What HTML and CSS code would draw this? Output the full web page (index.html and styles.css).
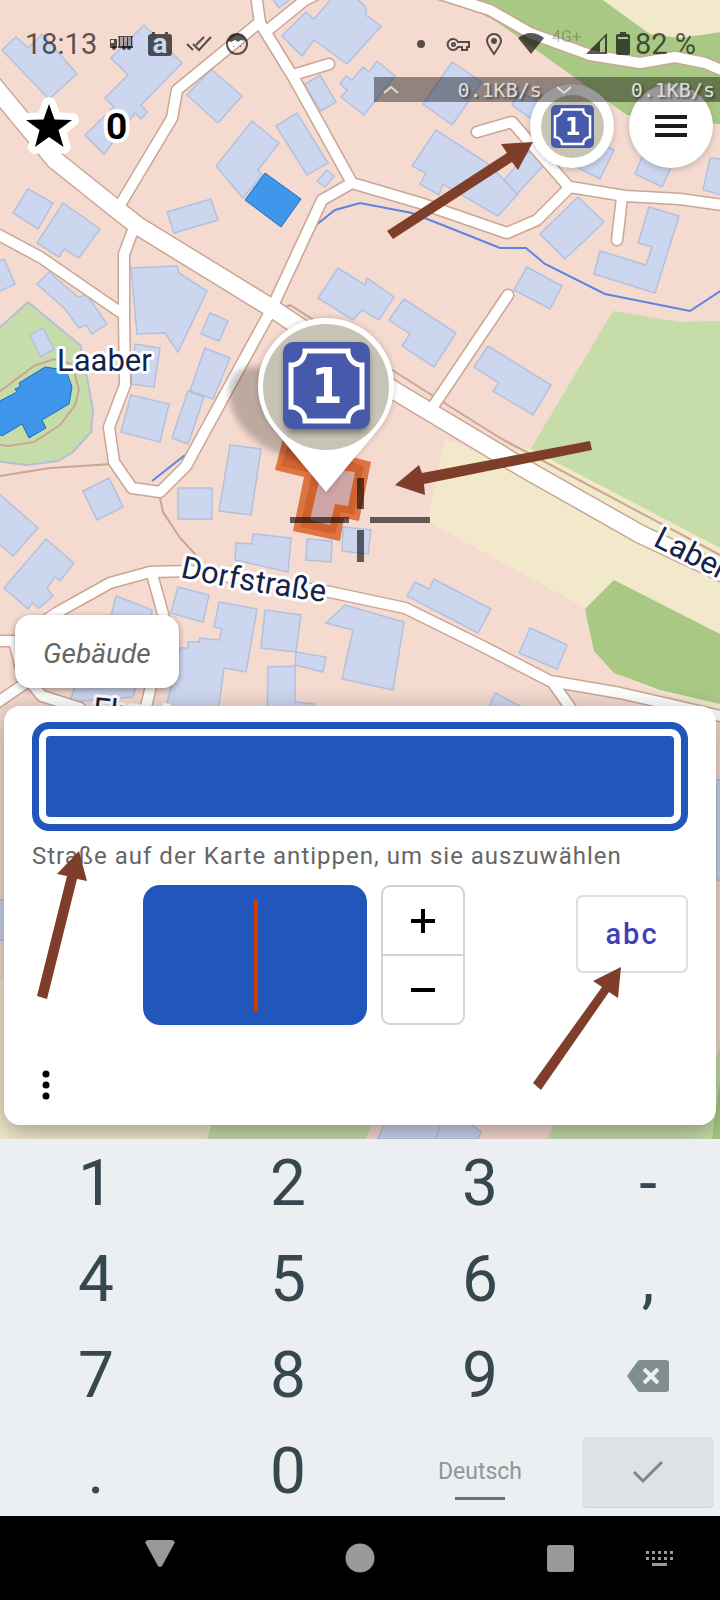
FILE: index.html
```
<!DOCTYPE html>
<html lang="de">
<head>
    <meta charset="UTF-8">
    <meta name="viewport" content="width=device-width, initial-scale=1.0">
    <title>Hausnummer</title>
    <link rel="stylesheet" href="styles.css">
</head>
<body>
    <main class="map-screen">
        <svg class="map" viewBox="0 0 720 1139" preserveAspectRatio="xMidYMin slice" role="img" aria-label="Karte von Laaber">
            <defs>
                <symbol id="housenumber" viewBox="0 0 87 87">
                    <rect width="87" height="87" rx="10" fill="#4759ab"/>
                    <path d="M22 9H65A14 14 0 0 0 79 23V65A14 14 0 0 0 65 79H22A14 14 0 0 0 8 65V23A14 14 0 0 0 22 9Z" fill="none" stroke="#fff" stroke-width="5"/>
                    <text x="44" y="61" text-anchor="middle" class="sign-digit">1</text>
                </symbol>
                <filter id="soft" x="-20%" y="-20%" width="140%" height="140%"><feGaussianBlur stdDeviation="3"/></filter>
                <g id="roads">
                    <path d="M256 -6L260 23L295 80L352 183"/>
                    <path d="M260 22L177 90L172 118L120 205"/>
                    <path d="M268 30L305 0L330 -12"/>
                    <path d="M293 75L329 64"/>
                    <path d="M133 230L124 254L124 315L125 385L109 427L114 462L132 488L160 492L186 466L270 312L322 200L352 183L420 203L507 233L537 220L570 187L625 196L680 199L730 206"/>
                    <path d="M477 132L512 122L568 186"/>
                    <path d="M622 198L617 240"/>
                    <path d="M-5 233L40 257L120 312"/>
                    <path d="M508 295L432 408"/>
                    <path d="M440 -6L490 10L530 33L590 55L640 63L675 57L705 63L740 78"/>
                    <path d="M20 638L58 612L110 583L150 572L190 571L330 592L405 608L480 645L550 681L620 693L720 716"/>
                    <path d="M152 574L166 625L144 715"/>
                    <path d="M553 683L576 716"/>
                    <path d="M-5 641H14L22 672L42 696L80 708M-5 704L30 680"/>
                </g>
                <path id="main-road" d="M-6 86L55 160L115 208L138 226L270 307L395 391L430 412L520 466L640 534L725 574"/>
            </defs>

            <!-- land use -->
            <g class="landuse">
                <path class="forest" d="M455 0H603L650 34L680 38L720 32V124L627 115L497 22Z"/>
                <path class="field" d="M603 0H720V32L680 38L650 34Z"/>
                <path class="meadow" d="M613 311L680 322L720 321V548L530 450Z"/>
                <path class="field" d="M445 439L485 455L529 448L720 548V715L680 708L614 673L585 608L427 521Z"/>
                <path class="residential" d="M585 608L594 651L614 673L660 692L720 712H560V600Z"/>
                <path class="forest" d="M614 580L720 634V704L660 690L614 673L594 651L585 609Z"/>
                <path class="meadow outlined" d="M-5 332L28 302L80 345L84 362L93 410L91 432L73 452L58 461L27 465L-5 461Z"/>
                <path class="field" d="M0 980H260V1139H0Z"/>
                <path class="meadow" d="M213 1120L207 1139H366L373 1120ZM555 1120L548 1139H720V1045L700 1120Z"/>
                <path class="forest" d="M720 1080L712 1139H720Z"/>
            </g>

            <!-- tracks -->
            <g class="track">
                <path d="M-5 395L34 366L54 359L72 364L79 390L75 405L60 425L34 442L8 446L-5 444"/>
                <path d="M0 476L50 468L112 464"/>
                <path d="M160 498L163 512L180 538L196 555"/>
                <path d="M280 310L290 305L400 375L500 438L720 555"/>
            </g>

            <!-- streams -->
            <g class="stream">
                <path d="M284 288L300 258L311 229L335 210L360 203L412 213L460 232L500 248H526L545 264L605 294L690 311L725 288"/>
                <path d="M152 481L185 455"/>
            </g>

            <g class="building">
                <path d="M2 50L16 37L28 48L42 34L77 74L49 99Z"/>
                <path d="M144 25L182 63L141 105L147 112L141 119L135 113L104 154L85 135L114 107L105 98L128 75L111 58Z"/>
                <path d="M211 69L242 96L218 123L187 95Z"/>
                <path d="M252 121L279 143L258 170L262 175L243 198L216 166Z"/>
                <path d="M276 126L297 113L328 163L307 175Z"/>
                <path d="M327 170L334 176L325 187L317 181Z"/>
                <path d="M167 212L211 199L218 220L174 233Z"/>
                <path d="M28 189L53 203L38 229L13 213Z"/>
                <path d="M63 203L100 229L79 258L64 249L59 257L37 243Z"/>
                <path d="M272 -2L279 8L292 -2Z"/>
                <path d="M282 36L306 12L314 19L333 -3H355L366 7V15L381 26L347 64L314 40L302 56Z"/>
                <path d="M304 85L320 75L336 102L321 111Z"/>
                <path d="M340 84L346 76L352 80L363 67L369 72L377 61L395 76L364 115L341 97L347 90Z"/>
                <path d="M452 62L482 82L452 125L423 104Z"/>
                <path d="M512 105L519 92L545 105L530 118Z"/>
                <path d="M436 130L490 165L504 180L518 194L498 216L443 184L439 195L420 184L426 173L412 166Z"/>
                <path d="M530 150L543 166L517 194L504 180Z"/>
                <path d="M578 197L604 222L565 259L540 234Z"/>
                <path d="M614 150L600 179L575 166L590 140Z"/>
                <path d="M645 150L635 174L662 187L672 165Z"/>
                <path d="M710 158L730 160V197L703 190Z"/>
                <path d="M649 207L679 216L655 293L594 274L600 251L646 265L652 247L638 243Z"/>
                <path d="M-3 262L4 259L15 284L-3 293Z"/>
                <path d="M37 284L49 272L78 297L87 295L107 324L92 334L86 325L79 328L65 309Z"/>
                <path d="M30 335L43 328L54 349L41 357Z"/>
                <path d="M131 268L177 266L179 273L207 291L178 352L165 333L137 334Z"/>
                <path d="M210 313L228 321L219 341L201 334Z"/>
                <path d="M205 348L230 358L213 399L190 391Z"/>
                <path d="M188 391L204 397L188 444L172 438Z"/>
                <path d="M135 344L160 348L154 387L131 384Z"/>
                <path d="M131 395L169 404L160 442L121 432Z"/>
                <path d="M230 445L261 449L251 515L219 511Z"/>
                <path d="M338 268L365 285L367 278L394 297L379 320L362 310L353 320L318 298Z"/>
                <path d="M404 299L456 333L434 367L402 346L410 334L389 320Z"/>
                <path d="M488 346L551 385L533 415L493 391L499 383L474 367Z"/>
                <path d="M527 267L562 286L550 309L514 290Z"/>
                <path d="M83 491L109 478L123 507L97 520Z"/>
                <path d="M-3 492L38 528L13 556L-3 542Z"/>
                <path d="M46 539L74 563L60 581L55 577L47 588L53 596L39 608L32 603L28 609L4 588Z"/>
                <path d="M178 488H212V519H178Z"/>
                <path d="M236 543L252 544L253 534L291 538L288 572L235 560Z"/>
                <path d="M307 539L332 541L331 562L306 560Z"/>
                <path d="M343 527L371 530L368 554L342 551Z"/>
                <path d="M178 587L209 595L203 622L171 613Z"/>
                <path d="M219 602L257 609L246 672L224 668L217 720H163L180 648H188V642H199L200 638L219 640L222 629L214 627Z"/>
                <path d="M116 596L152 610L150 640H105Z"/>
                <path d="M265 610L301 615L296 652L326 657L323 672L295 665L296 652L261 648Z"/>
                <path d="M268 667L295 666V702L314 704V720H267Z"/>
                <path d="M345 605L404 622L393 690L342 679L353 630L326 623Z"/>
                <path d="M415 582L429 589L434 579L491 609L478 633L407 596Z"/>
                <path d="M530 628L567 645L557 669L519 653Z"/>
                <path d="M495 693L522 707L486 715Z"/>
                <path d="M75 685L138 680L133 697L70 702Z"/>
                <path d="M386 1120L378 1139H478L481 1132L466 1120ZM442 1120L436 1139"/>
                <path d="M716 780H724V880H716ZM-4 900H6V940H-4Z"/>
            </g>
            <g class="landmark">
                <path d="M265 173L301 199L281 227L245 200Z"/>
                <path d="M-4 403L17 392L15 389L20 387L19 383L45 367L58 369L67 373L72 387L69 404L42 420L46 428L29 438L22 424L2 436L-4 432Z"/>
            </g>

            <!-- roads: casing first, then the white filling -->
            <g class="road">
                <use href="#roads" class="casing"/>
                <use href="#main-road" class="casing-wide"/>
                <use href="#roads" class="filling"/>
                <use href="#main-road" class="filling-wide"/>
            </g>

            <g class="place-label">
                <text x="57" y="371">Laaber</text>
                <path id="street-line" d="M180 577Q250 593 350 605" fill="none" stroke="none"/>
                <text><textPath href="#street-line">Dorfstraße</textPath></text>
                <text transform="translate(652 545) rotate(27)">Laber</text>
                <text x="92" y="719" transform="rotate(6 92 719)">Flurstr.</text>
            </g>

            <!-- selected building -->
            <path d="M283 438L371 462L359 521L344 518L340 541L293 531L304 477L275 470Z" fill="#df7443"/>
            <path d="M289 443L364 466L354 515L341 512L335 534L300 527L312 473L281 466Z" fill="#d0622f"/>
            <path d="M322 468L355 472L348 506L335 504L330 525L310 520Z" fill="#cfa6a5"/>

            <!-- pin -->
            <path d="M229 390C229 365 255 362 285 372L320 440L305 462L270 450C245 436 229 415 229 390Z" fill="#000" opacity=".22" filter="url(#soft)"/>
            <path d="M326 494L281 437A68 68 0 1 1 371 437Z" fill="#000" opacity=".2" filter="url(#soft)"/>
            <path d="M326 492L276 432A68 68 0 1 1 376 432Z" fill="#fff"/>
            <circle cx="326" cy="387" r="63" fill="#c7c3b5"/>
            <rect x="284" y="346" width="85" height="87" rx="10" fill="#000" opacity=".4" filter="url(#soft)"/>
            <use href="#housenumber" x="283" y="342" width="87" height="87"/>

            <!-- crosshair -->
            <path d="M357 478h7v31h-7zM357 530h7v32h-7zM290 517h59v6h-59zM370 517h60v6h-60z" fill="#000" opacity=".6"/>
        </svg>

        <header class="status-bar">
            <div class="status-left">
                <span>18:13</span>
                <svg width="24" height="26" viewBox="0 0 24 26" fill="currentColor"><path d="M8 6h15v10H8z" opacity=".4"/><path d="M8 5h15v1H8zM9 6h1v10H9zm4 0h1v10h-1zm4 0h1v10h-1zm4 0h1v10h-1zM8 15h15v2H8z"/><path d="M0 8h7v9H0zm1 1v3h3V9z" fill-rule="evenodd"/><circle cx="4" cy="17" r="2"/><circle cx="14" cy="17" r="2"/><circle cx="19" cy="17" r="2"/></svg>
                <svg width="26" height="26" viewBox="0 0 26 26"><path d="M3 3h2V1h3v2h10V1h3v2h1a3 3 0 0 1 3 3v16a3 3 0 0 1-3 3H4a3 3 0 0 1-3-3V5z" fill="currentColor"/><text x="13" y="22" text-anchor="middle" class="calendar-letter">a</text></svg>
                <svg width="26" height="26" viewBox="0 0 26 26" fill="none" stroke="currentColor" stroke-width="2"><path d="M1 13l6 6M7 13l6 6L25 6M10 14l8-8"/></svg>
                <svg width="24" height="26" viewBox="0 0 24 26"><circle cx="12" cy="13" r="10" fill="none" stroke="currentColor" stroke-width="2"/><path d="M3 10Q6 3 12 3T21 10L16 9L13 11L10 9L6 11Z" fill="currentColor"/><path d="M8 15h1v1H8zM15 15h1v1h-1z" fill="currentColor"/></svg>
            </div>
            <div class="status-right">
                <svg width="32" height="26" viewBox="0 0 32 26"><circle cx="14" cy="13" r="4" fill="currentColor"/></svg>
                <svg width="32" height="26" viewBox="0 0 32 26" fill="none" stroke="currentColor" stroke-width="2"><path d="M14 11A5.500 5.500 0 1 0 14 16H18V19H23V16H25V11Z"/><circle cx="9.500" cy="13.500" r="1.500"/></svg>
                <svg width="32" height="26" viewBox="0 0 32 26"><path d="M13 23C9 17 6 13 6 10a7 7 0 0 1 14 0C20 13 17 17 13 23Z" fill="none" stroke="currentColor" stroke-width="2"/><circle cx="13" cy="10" r="3" fill="currentColor"/></svg>
                <svg width="29" height="26" viewBox="0 0 29 26"><path d="M0 7Q13-3 26 7L13 23Z" fill="currentColor"/></svg>
                <span class="network">4G+</span>
                <svg width="25" height="26" viewBox="0 0 25 26"><path d="M0 23L21 2V23ZM14 11V21H19V6Z" fill="currentColor" fill-rule="evenodd"/></svg>
                <svg width="14" height="26" viewBox="0 0 14 26"><path d="M4 1h6v2h2a2 2 0 0 1 2 2v17a2 2 0 0 1-2 2H2a2 2 0 0 1-2-2V5a2 2 0 0 1 2-2h2zM2 6v2h10V6z" fill="currentColor" fill-rule="evenodd"/></svg>
                <span>82 %</span>
            </div>
        </header>

        <div class="net-speed">
            <svg width="16" height="10" viewBox="0 0 16 10"><path d="M1 8L8 2L15 8"/></svg>
            <span>0.1KB/s</span>
            <svg width="16" height="10" viewBox="0 0 16 10"><path d="M1 2L8 8L15 2"/></svg>
            <span>0.1KB/s</span>
        </div>

        <div class="toolbar">
            <div class="answers">
                <svg width="62" height="62" viewBox="0 0 62 62"><path d="M31 9L36.500 24.500L54 25L40.500 35L45.500 52L31 42L17 52L21.500 35L8 25L25.500 24.500Z" fill="#000" stroke="#fff" stroke-width="14" stroke-linejoin="round" paint-order="stroke"/></svg>
                <span class="answer-count">0</span>
            </div>
            <button class="round-button" aria-label="Hausnummern">
                <span class="quest-ring"><svg width="43" height="43"><use href="#housenumber"/></svg></span>
            </button>
            <button class="round-button" aria-label="Menü">
                <svg width="32" height="22" viewBox="0 0 32 22"><path d="M0 0h32v4H0zM0 9h32v4H0zM0 18h32v4H0z" fill="#1c1c1c"/></svg>
            </button>
        </div>

        <div class="hint-chip">Gebäude</div>

        <form class="panel">
            <div class="street-sign">
                <input class="street-input" id="street" type="text" autocomplete="off">
            </div>
            <label class="street-hint" for="street">Straße auf der Karte antippen, um sie auszuwählen</label>
            <div class="number-row">
                <div class="number-group">
                    <div class="number-field">
                        <input class="number-input" type="text" inputmode="numeric" aria-label="Hausnummer">
                        <span class="caret"></span>
                    </div>
                    <div class="stepper">
                        <button type="button" aria-label="Erhöhen"><svg width="26" height="26" viewBox="0 0 26 26"><path d="M11 1h4v10h10v4H15v10h-4V15H1v-4h10z"/></svg></button>
                        <button type="button" aria-label="Verringern"><svg width="26" height="26" viewBox="0 0 26 26"><path d="M1 11h24v4H1z"/></svg></button>
                    </div>
                </div>
                <button type="button" class="abc-button">abc</button>
            </div>
            <button type="button" class="more-button" aria-label="Mehr">
                <svg width="8" height="30" viewBox="0 0 8 30"><circle cx="4" cy="4" r="3.500"/><circle cx="4" cy="15" r="3.500"/><circle cx="4" cy="26" r="3.500"/></svg>
            </button>
        </form>

        <svg class="arrows" viewBox="0 0 720 1139" preserveAspectRatio="xMidYMin slice" aria-hidden="true">
            <path d="M387 231L507 153L501 144L533 142L518 170L512 162L393 239Z"/>
            <path d="M590 441L422 473L419 465L395 485L425 495L424 484L592 450Z"/>
            <path d="M37 996L67 876L57 874L79 851L87 881L77 879L47 999Z"/>
            <path d="M533 1083L602 987L593 981L621 967L618 998L609 992L541 1090Z"/>
        </svg>
    </main>

    <section class="keyboard" aria-label="Tastatur">
        <button>1</button>
        <button>2</button>
        <button>3</button>
        <button>-</button>
        <button>4</button>
        <button>5</button>
        <button>6</button>
        <button>,</button>
        <button>7</button>
        <button>8</button>
        <button>9</button>
        <button aria-label="Löschen"><svg width="42" height="32" viewBox="0 0 42 32"><path d="M13 0H39a3 3 0 0 1 3 3V29a3 3 0 0 1-3 3H13a4 4 0 0 1-3-2L0 16L10 2A4 4 0 0 1 13 0Z" fill="#808e92"/><path d="M17 9L31 23M31 9L17 23" stroke="#ebeff2" stroke-width="4"/></svg></button>
        <button>.</button>
        <button>0</button>
        <button class="language">Deutsch</button>
        <button class="enter" aria-label="Fertig"><svg width="32" height="24" viewBox="0 0 32 24"><path d="M2 12L11 21L30 2" fill="none" stroke="#858585" stroke-width="3"/></svg></button>
    </section>

    <nav class="nav-bar">
        <button class="nav-back" aria-label="Zurück"><svg width="30" height="28" viewBox="0 0 30 28"><path d="M3 0H27Q31 1 29 4L17 26Q15 28 13 26L1 4Q-1 1 3 0Z"/></svg></button>
        <button class="nav-home" aria-label="Startseite"><svg width="30" height="30" viewBox="0 0 30 30"><circle cx="15" cy="15" r="14.500"/></svg></button>
        <button class="nav-recent" aria-label="Letzte Apps"><svg width="27" height="27" viewBox="0 0 27 27"><rect width="27" height="27" rx="3"/></svg></button>
        <button class="nav-keyboard" aria-label="Tastatur wechseln"><svg width="28" height="16" viewBox="0 0 28 16"><path d="M0 1h3v3H0zM6 1h3v3H6zM12 1h3v3h-3zM18 1h3v3h-3zM24 1h3v3h-3zM0 7h3v3H0zM6 7h3v3H6zM12 7h3v3h-3zM18 7h3v3h-3zM24 7h3v3h-3zM6 13h15v3H6z"/></svg></button>
    </nav>
</body>
</html>
```
FILE: styles.css
```
* {
    box-sizing: border-box;
}
body {
    display: flex;
    flex-direction: column;
    min-height: 100vh;
    margin: 0;
    font-family: Roboto, "Liberation Sans", sans-serif;
    background-color: #000;
}
button {
    padding: 0;
    border: 0;
    background: none;
    font-family: inherit;
    cursor: pointer;
}
svg {
    display: block;
    flex: none;
}

/* map */
.map-screen {
    position: relative;
    flex: 1;
    display: flex;
    flex-direction: column;
    overflow: hidden;
    background-color: #f4dacf;
}
.map,
.arrows {
    position: absolute;
    top: 0;
    left: 0;
    width: 100%;
    height: 100%;
}
.arrows {
    z-index: 3;
    fill: #7e3e2a;
    pointer-events: none;
}
.forest {
    fill: #a9c884;
}
.meadow {
    fill: #c6dda9;
}
.outlined {
    stroke: #b3c0d8;
    stroke-width: 2;
}
.field {
    fill: #f2e9cb;
}
.residential {
    fill: #f4dacf;
}
.building {
    fill: #ccd6ef;
    stroke: #b3c1df;
    stroke-width: 1.5;
}
.landmark {
    fill: #3e97ea;
    stroke: #1f6cb8;
    stroke-width: 1;
}
.track {
    fill: none;
    stroke: #c9a695;
    stroke-width: 2;
}
.stream {
    fill: none;
    stroke: #5c84e3;
    stroke-width: 2;
}
.road {
    fill: none;
    stroke-linecap: round;
    stroke-linejoin: round;
}
.casing {
    stroke: #c9a695;
    stroke-width: 13;
}
.casing-wide {
    stroke: #c9a695;
    stroke-width: 20;
}
.filling {
    stroke: #fff;
    stroke-width: 10;
}
.filling-wide {
    stroke: #fff;
    stroke-width: 17;
}
.place-label {
    fill: #14234a;
    stroke: #fff;
    stroke-width: 6;
    stroke-linejoin: round;
    paint-order: stroke;
    font-size: 31px;
}
.sign-digit {
    fill: #fff;
    font-family: "DejaVu Sans Condensed", "DejaVu Sans", sans-serif;
    font-size: 50px;
    font-weight: bold;
}

/* status bar */
.status-bar {
    position: relative;
    display: flex;
    justify-content: space-between;
    align-items: center;
    height: 84px;
    padding: 4px 24px 0 25px;
    color: rgba(0, 0, 0, 0.65);
    font-size: 29px;
}
.status-left,
.status-right {
    display: flex;
    align-items: center;
}
.status-left {
    gap: 13px;
}
.status-right {
    gap: 5px;
}
.network {
    align-self: flex-start;
    opacity: 0.35;
    font-size: 16px;
}
.calendar-letter {
    fill: #ccd6ef;
    font-size: 28px;
    font-weight: bold;
}
.net-speed {
    position: absolute;
    top: 77px;
    right: 0;
    z-index: 2;
    display: flex;
    justify-content: space-between;
    align-items: center;
    width: 346px;
    height: 25px;
    padding: 0 5px 0 9px;
    background-color: rgba(0, 0, 0, 0.4);
    color: #ddd;
    font-family: "DejaVu Sans Mono", monospace;
    font-size: 20px;
    text-shadow: 2px 2px 2px rgba(0, 0, 0, 0.4);
}
.net-speed span {
    margin-left: 44px;
}
.net-speed svg {
    fill: none;
    stroke: #ddd;
    stroke-width: 2;
}

/* toolbar */
.toolbar {
    position: relative;
    display: flex;
    align-items: center;
    gap: 15px;
    padding: 0 7px 0 18px;
}
.answers {
    display: flex;
    align-items: center;
    gap: 26px;
    margin-right: auto;
}
.answer-count {
    font-size: 37px;
    font-weight: bold;
    -webkit-text-stroke: 8px #fff;
    paint-order: stroke fill;
}
.round-button {
    display: flex;
    justify-content: center;
    align-items: center;
    width: 84px;
    height: 84px;
    border-radius: 50%;
    background-color: #fff;
    box-shadow: 0 2px 6px rgba(0, 0, 0, 0.2);
}
.quest-ring {
    display: flex;
    justify-content: center;
    align-items: center;
    width: 63px;
    height: 63px;
    border-radius: 50%;
    background-color: #c7c3b5;
}

/* answer panel */
.hint-chip {
    position: relative;
    align-self: flex-start;
    margin: auto 0 18px 15px;
    padding: 22px 28px 18px;
    border-radius: 16px;
    background-color: #fff;
    box-shadow: 0 2px 6px rgba(0, 0, 0, 0.4);
    color: #666;
    font-size: 28px;
    font-style: italic;
    line-height: 33px;
}
.panel {
    position: relative;
    margin: 0 4px 14px;
    padding: 16px 28px 22px;
    border-radius: 16px;
    background-color: #fff;
    box-shadow: 0 6px 24px rgba(0, 0, 0, 0.35);
}
.street-sign {
    padding: 7px;
    border: 7px solid #2156bc;
    border-radius: 17px;
    background-color: #fff;
}
.street-input {
    display: block;
    width: 100%;
    height: 81px;
    padding: 0 16px;
    border: 0;
    border-radius: 4px;
    background-color: #2156bc;
    color: #fff;
    font-size: 32px;
}
.street-hint {
    display: block;
    margin: 13px 0 17px;
    color: #666;
    font-size: 24px;
    letter-spacing: 1px;
    line-height: 24px;
}
.number-row {
    display: flex;
    align-items: flex-start;
}
.number-group {
    flex: 1;
    display: flex;
    justify-content: center;
    gap: 14px;
}
.number-field {
    position: relative;
}
.number-input {
    display: block;
    width: 224px;
    height: 140px;
    border: 0;
    border-radius: 17px;
    background-color: #2156bc;
    color: #fff;
    font-size: 64px;
    text-align: center;
}
.caret {
    position: absolute;
    top: 14px;
    bottom: 14px;
    left: 50%;
    width: 4px;
    margin-left: -1px;
    background-color: #d13c00;
}
.stepper {
    display: flex;
    flex-direction: column;
    width: 84px;
    border: 2px solid #d3d3d3;
    border-radius: 9px;
}
.stepper button {
    flex: 1;
    display: flex;
    justify-content: center;
    align-items: center;
}
.stepper button + button {
    border-top: 2px solid #d3d3d3;
}
.abc-button {
    width: 112px;
    height: 78px;
    margin-top: 10px;
    border: 2px solid #dedede;
    border-radius: 7px;
    color: #3f3fb8;
    font-size: 29px;
    font-weight: 500;
    letter-spacing: 2px;
}
.more-button {
    display: flex;
    justify-content: center;
    align-items: center;
    width: 28px;
    height: 36px;
    margin-top: 42px;
}

/* keyboard */
.keyboard {
    display: grid;
    grid-template-columns: 4fr 4fr 4fr 3fr;
    grid-auto-rows: 70px;
    row-gap: 26px;
    padding: 10px 0 9px;
    background-color: #ebeff2;
}
.keyboard button {
    display: flex;
    justify-content: center;
    align-items: center;
    color: #37474f;
    font-size: 64px;
    line-height: 70px;
}
.keyboard .language {
    position: relative;
    color: #8b989b;
    font-size: 23px;
}
.language::after {
    content: "";
    position: absolute;
    bottom: 7px;
    left: 50%;
    width: 50px;
    height: 3px;
    margin-left: -25px;
    background-color: #65767b;
}
.keyboard .enter {
    margin: 0 6px;
    border-radius: 5px;
    background-color: #dee2e5;
    box-shadow: 0 1px 0 #cfd3d6;
}

/* navigation bar */
.nav-bar {
    display: grid;
    grid-template-columns: repeat(7, 1fr);
    height: 84px;
    padding: 0 10px;
    background-color: #000;
    fill: #999;
}
.nav-bar button {
    display: flex;
    justify-content: center;
    align-items: center;
}
.nav-bar .nav-back {
    grid-column: 2;
    padding-bottom: 8px;
}
.nav-home {
    grid-column: 4;
}
.nav-recent {
    grid-column: 6;
}
.nav-keyboard {
    grid-column: 7;
}
```
